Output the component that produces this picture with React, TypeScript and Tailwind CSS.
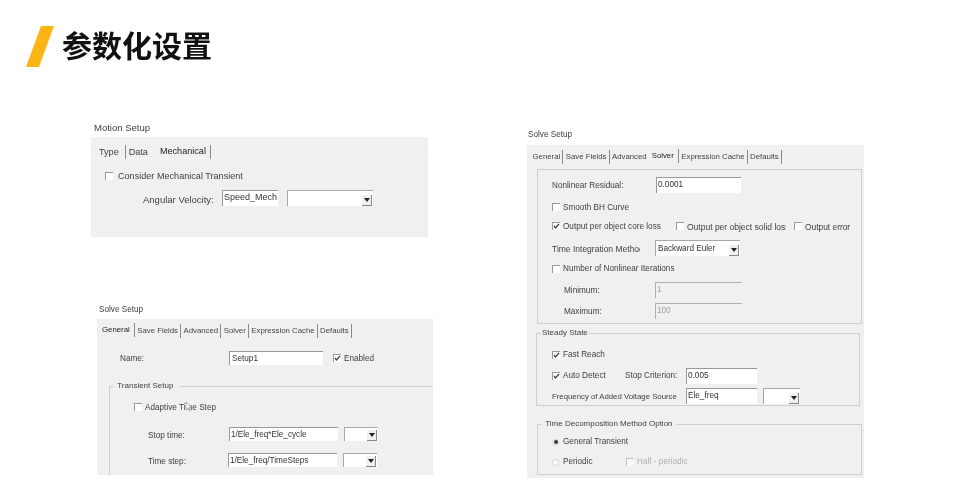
import React from "react";

const font = { fontFamily: '"Liberation Sans", Arial, sans-serif' };

function Field({ value, className = "", disabled = false }: { value?: string; className?: string; disabled?: boolean }) {
  return (
    <div
      className={`flex h-full items-start overflow-hidden whitespace-nowrap border-t-[1.5px] border-l-[1.5px] pl-[1px] pt-[1px] leading-[11px] ${
        disabled ? "border-[#b0b0b0] bg-[#f0f0f0] text-[#a0a0a0]" : "border-[#999] bg-white text-[#333]"
      } ${className}`}
    >
      {value}
    </div>
  );
}

function Combo({ className = "", label }: { className?: string; label?: string }) {
  return (
    <div className={`flex h-full items-center justify-between border-t-[1.5px] border-l-[1.5px] border-[#a8a8a8] bg-white pl-[2px] leading-[11px] text-[#333] ${className}`}>
      <span className="whitespace-nowrap">{label}</span>
      <span className="mr-[1px] flex h-[11px] w-[10px] items-center justify-center self-end border-r border-b border-[#888] bg-[#f0f0f0]">
        <svg width="6" height="4" viewBox="0 0 6 4"><path d="M0 0h6L3 4z" fill="#222" /></svg>
      </span>
    </div>
  );
}

function Check({ checked = false, className = "" }: { checked?: boolean; className?: string }) {
  return (
    <span className={`flex h-[8px] w-[8px] shrink-0 items-center justify-center border-t border-l border-[#999] bg-white ${className}`}>
      {checked && (
        <svg width="7" height="7" viewBox="0 0 7 7"><path d="M1 3l1.500 2L6 1" fill="none" stroke="#444" strokeWidth="1.300" /></svg>
      )}
    </span>
  );
}

function Radio({ checked = false }: { checked?: boolean }) {
  return (
    <span className="flex h-[7px] w-[7px] shrink-0 items-center justify-center rounded-full border border-[#ccc] bg-white">
      {checked && <span className="h-[4px] w-[4px] rounded-full bg-[#333]" />}
    </span>
  );
}

function Tabs({ items, active, noSep = [] }: { items: string[]; active: string; noSep?: string[] }) {
  return (
    <div className="flex items-center text-[7.800px]">
      {items.map((t) => (
        <span
          key={t}
          className={`flex h-[14px] items-center whitespace-nowrap ${noSep.includes(t) ? "" : "border-r border-[#8a8a8a]"} ${
            t === active ? "-translate-y-[1px] pl-[3px] pr-[4px] text-[#222]" : "pl-[2.500px] pr-[2px] text-[#444]"
          }`}
        >
          {t}
        </span>
      ))}
    </div>
  );
}

const solveTabs = ["General", "Save Fields", "Advanced", "Solver", "Expression Cache", "Defaults"];

export default function App() {
  return (
    <div className="relative h-[495px] w-[954px] overflow-hidden bg-white blur-[0.4px]" style={font}>
      <header className="flex h-[100px] items-start pl-[26px] pt-[26px]">
        <svg width="28" height="41" viewBox="0 0 28 41" className="shrink-0">
          <path d="M15 0h13L13 41H0z" fill="#fdb515" />
        </svg>
        <h1
          className="ml-[8px] -mt-[1px] text-[30px] font-bold leading-[38px] text-[#111]"
          style={{ fontFamily: '"Noto Sans CJK SC", sans-serif' }}
        >
          参数化设置
        </h1>
      </header>

      {/* Motion Setup screenshot */}
      <section className="absolute left-[91px] top-[119px] w-[337px] text-[9.500px] text-[#3f3f3f]">
        <div className="flex h-[18px] items-center pl-[3px]">Motion Setup</div>
        <div className="h-[100px] bg-[#f0f0f0]">
          <div className="flex h-[22px] items-end border-b border-[#f6f6f6] pl-[8px] text-[9.100px]">
            <span className="flex h-[14px] translate-y-[1px] items-center border-r border-[#8a8a8a] pr-[6px] pt-[1px]">Type</span>
            <span className="ml-[3px] flex h-[14px] translate-y-[1px] items-center pt-[1px]">Data</span>
            <span className="ml-[12px] flex h-[14px] translate-y-[1px] items-center border-r border-[#8a8a8a] pr-[4px] text-[#222]">Mechanical</span>
          </div>
          <div className="mt-[9px] flex h-[16px] items-center pl-[14px] text-[9.100px]">
            <Check />
            <span className="ml-[5px] pt-[2px]">Consider Mechanical Transient</span>
          </div>
          <div className="mt-[6px] flex h-[16px] items-center">
            <span className="ml-[52px] w-[79px] pt-[5px]">Angular Velocity:</span>
            <Field value="Speed_Mech" className="w-[56px] text-[9px]" />
            <Combo className="ml-[9px] w-[86px]" />
          </div>
        </div>
      </section>

      {/* Solve Setup: General */}
      <section className="absolute left-[97px] top-[301px] w-[336px] text-[8.200px] text-[#3f3f3f]">
        <div className="flex h-[18px] items-center pl-[2px]">Solve Setup</div>
        <div className="h-[156px] overflow-hidden bg-[#f0f0f0]">
          <div className="flex h-[19px] items-end pl-[2px]">
            <Tabs items={solveTabs} active="General" />
          </div>
          <div className="mt-[13px] flex h-[14px] items-center">
            <span className="ml-[23px] w-[109px] pt-[3px]">Name:</span>
            <Field value="Setup1" className="w-[94px] pl-[2px]" />
            <Check checked className="ml-[10px]" />
            <span className="ml-[3px] pt-[2px]">Enabled</span>
          </div>
          <fieldset className="ml-[12px] mt-[15px] border-t border-l border-[#cfcfcf] pb-[12px] pl-[24px]">
            <legend className="-ml-[20px] px-[1px] text-[8px] leading-[12px]">&nbsp;Transient Setup&nbsp;&nbsp;</legend>
            <div className="mt-[8px] flex h-[14px] items-center">
              <Check />
              <span className="ml-[3px] pt-[2px]">Adaptive Time Step</span>
            </div>
            <div className="mt-[13px] flex h-[14px] items-center">
              <span className="ml-[14px] w-[81px] pt-[4px]">Stop time:</span>
              <Field value="1/Ele_freq*Ele_cycle" className="w-[109px]" />
              <Combo className="ml-[6px] w-[34px]" />
            </div>
            <div className="mt-[12px] flex h-[14px] items-center">
              <span className="ml-[14px] w-[80px] pt-[4px]">Time step:</span>
              <Field value="1/Ele_freq/TimeSteps" className="w-[109px]" />
              <Combo className="ml-[6px] w-[34px]" />
            </div>
          </fieldset>
        </div>
      </section>

      {/* pointer over Adaptive Time Step */}
      <svg width="8" height="11" viewBox="0 0 8 11" className="absolute left-[185px] top-[401px]">
        <path d="M1 1v8l2-2 1.500 3 1-.5L4 6.500h3z" fill="#fff" stroke="#888" strokeWidth="0.700" />
      </svg>

      {/* Solve Setup: Solver */}
      <section className="absolute left-[527px] top-[126px] w-[337px] text-[8.200px] text-[#3f3f3f]">
        <div className="h-[19px] pl-[1px] pt-[3px] leading-[12px]">Solve Setup</div>
        <div className="h-[333px] bg-[#f0f0f0] pl-[10px] pr-[2px]">
          <div className="-ml-[7px] flex h-[24px] items-center">
            <Tabs items={solveTabs} active="Solver" noSep={["Advanced"]} />
          </div>
          <div className="flex h-[155px] flex-col border border-[#cfcfcf] pl-[14px]">
            <div className="mt-[7px] flex h-[16px] items-center">
              <span className="w-[104px] pt-[2px]">Nonlinear Residual:</span>
              <Field value="0.0001" className="w-[85px]" />
            </div>
            <div className="mt-[6px] flex h-[16px] items-center">
              <Check />
              <span className="ml-[3px] pt-[2px]">Smooth BH Curve</span>
            </div>
            <div className="mt-[3px] flex h-[16px] items-center">
              <Check checked />
              <span className="ml-[3px] w-[113px] whitespace-nowrap pt-[2px]">Output per object core loss</span>
              <Check />
              <span className="ml-[3px] w-[99px] overflow-hidden whitespace-nowrap pt-[2px] text-[8.500px]">Output per object solid loss</span>
              <Check className="ml-[8px]" />
              <span className="ml-[3px] whitespace-nowrap pt-[2px] text-[8.400px]">Output error</span>
            </div>
            <div className="mt-[6px] flex h-[16px] items-center">
              <span className="w-[88px] overflow-hidden whitespace-nowrap pt-[3px] text-[8.500px]">Time Integration Method</span>
              <Combo label="Backward Euler" className="ml-[15px] w-[85px]" />
            </div>
            <div className="mt-[5px] flex h-[16px] items-center">
              <Check />
              <span className="ml-[3px] pt-[1px]">Number of Nonlinear Iterations</span>
            </div>
            <div className="mt-[5px] flex h-[16px] items-center">
              <span className="ml-[12px] w-[91px] pt-[2px]">Minimum:</span>
              <Field value="1" disabled className="w-[87px]" />
            </div>
            <div className="mt-[5px] flex h-[16px] items-center">
              <span className="ml-[12px] w-[91px] pt-[2px]">Maximum:</span>
              <Field value="100" disabled className="w-[87px]" />
            </div>
          </div>

          <fieldset className="-ml-[1px] mr-[2px] mt-[3px] border border-[#cfcfcf] pb-[1px] pl-[15px]">
            <legend className="-ml-[11px] px-[1px] text-[8px] leading-[12px]">Steady State</legend>
            <div className="mt-[8px] flex h-[16px] items-center">
              <Check checked />
              <span className="ml-[3px]">Fast Reach</span>
            </div>
            <div className="mt-[5px] flex h-[16px] items-center">
              <Check checked />
              <span className="ml-[3px] w-[62px] pt-[1px]">Auto Detect</span>
              <span className="w-[61px] whitespace-nowrap pt-[1px]">Stop Criterion:</span>
              <Field value="0.005" className="w-[71px]" />
            </div>
            <div className="mt-[4px] flex h-[16px] items-center">
              <span className="w-[134px] whitespace-nowrap pt-[1px] text-[7.800px]">Frequency of Added Voltage Source</span>
              <Field value="Ele_freq" className="w-[71px]" />
              <Combo className="ml-[6px] h-[13px] w-[37px]" />
            </div>
          </fieldset>

          <fieldset className="mt-[12px] border border-[#cfcfcf] pb-[5px] pl-[14px]">
            <legend className="-ml-[10px] px-[1px] text-[8px] leading-[12px]">&nbsp;Time Decomposition Method Option&nbsp;</legend>
            <div className="mt-[5px] flex h-[14px] items-center">
              <Radio checked />
              <span className="ml-[4px]">General Transient</span>
            </div>
            <div className="mt-[6px] flex h-[14px] items-center">
              <Radio />
              <span className="ml-[4px] w-[63px]">Periodic</span>
              <Check className="opacity-50" />
              <span className="ml-[3px] text-[#b0b0b0]">Half - periodic</span>
            </div>
          </fieldset>
        </div>
      </section>
    </div>
  );
}
